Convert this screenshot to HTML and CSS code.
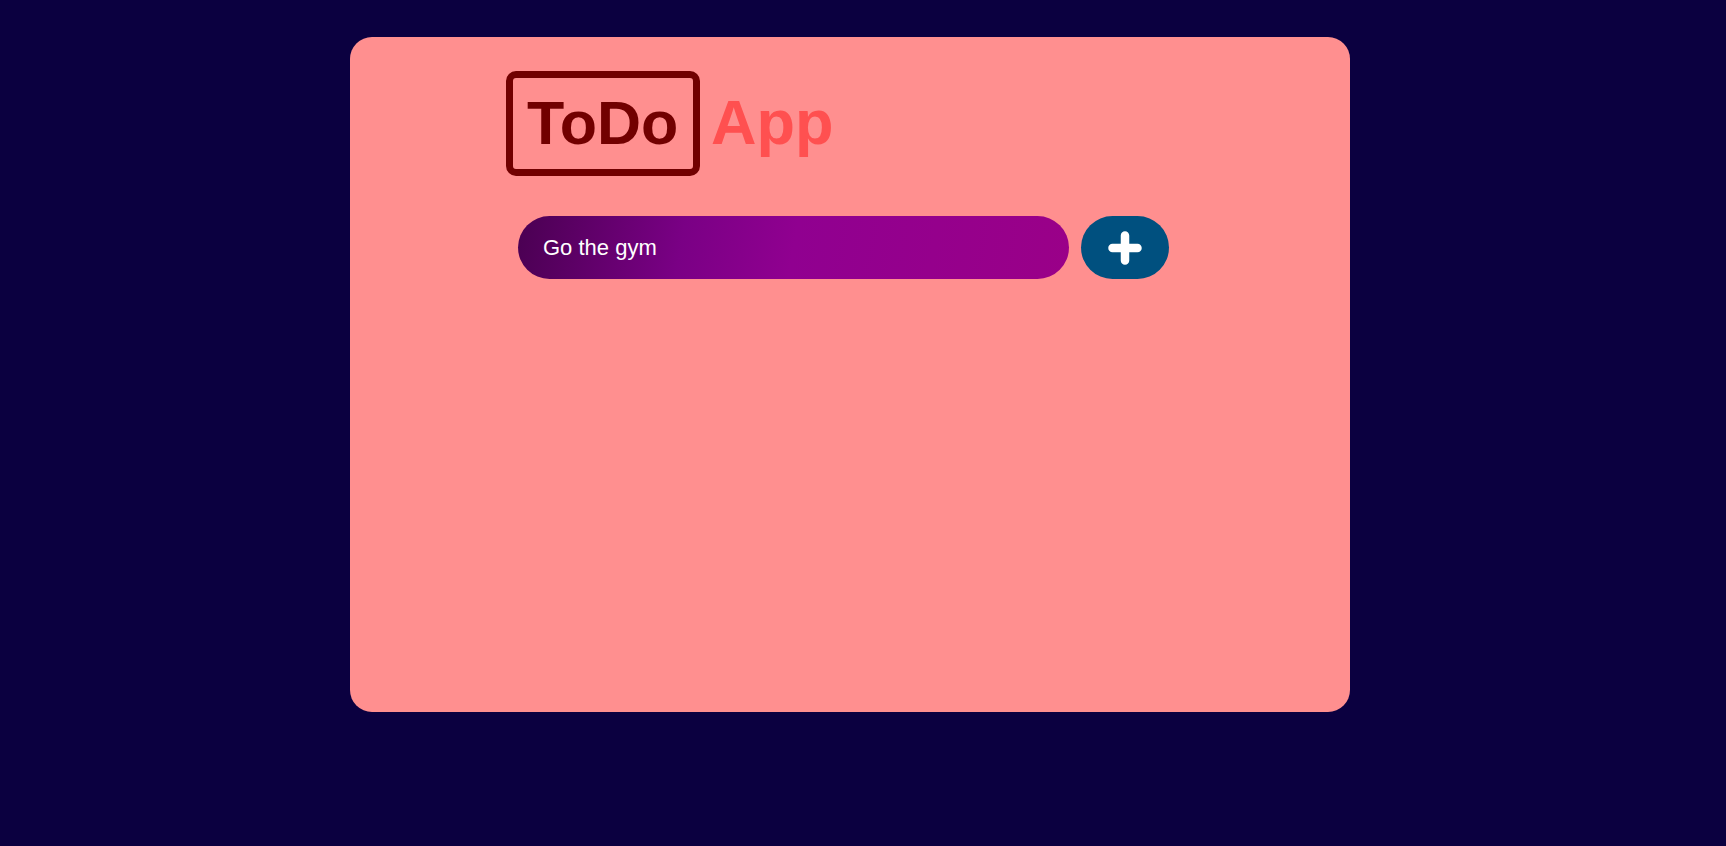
FILE: index.html
```html
<!DOCTYPE html>
<html lang="en">
<head>
<meta charset="utf-8">
<title>ToDo App</title>
<link rel="stylesheet" href="styles.css">
</head>
<body>
<main class="card">
  <header class="header">
    <h1 class="logo">ToDo</h1>
    <span class="app">App</span>
  </header>
  <form class="add-form">
    <input class="task-input" type="text" value="Go the gym" autofocus>
    <button class="add-btn" type="button" aria-label="Add">
      <svg width="34" height="34" viewBox="0 0 34 34"><path d="M17 4.5V29.5M4.5 17H29.5" stroke="#fff" stroke-width="8.5" stroke-linecap="round" fill="none"/></svg>
    </button>
  </form>
</main>
</body>
</html>
```
FILE: styles.css
```css
html, body {
  margin: 0;
  height: 100%;
}
body {
  background: #0b0040;
  padding: 37px 0 0 350px;
  box-sizing: border-box;
  font-family: "Liberation Sans", Arial, sans-serif;
}
.card {
  width: 1000px;
  height: 675px;
  background: #ff8f8f;
  border-radius: 22px;
  box-sizing: border-box;
  padding: 34px 0 0 156px;
}
.header {
  display: flex;
  align-items: baseline;
  gap: 11px;
}
.logo {
  margin: 0;
  box-sizing: border-box;
  width: 194px;
  height: 105px;
  border: 7px solid #720000;
  border-radius: 10px;
  color: #720000;
  font-size: 61px;
  font-weight: bold;
  line-height: 91px;
  padding-left: 14px;
}
.app {
  color: #ff5050;
  font-size: 63px;
  font-weight: bold;
}
.add-form {
  display: flex;
  gap: 12px;
  margin: 40px 0 0 12px;
}
.task-input {
  width: 551px;
  height: 63px;
  box-sizing: border-box;
  border: none;
  outline: none;
  border-radius: 32px;
  padding: 0 26px 0 25px;
  font-family: "Liberation Sans", Arial, sans-serif;
  font-size: 22px;
  color: #fff;
  caret-color: #fff;
  background: linear-gradient(100deg, #4a0052 0%, #7a0085 30%, #900090 50%, #9a0088 100%);
}
.add-btn {
  width: 88px;
  height: 63px;
  border: none;
  border-radius: 32px;
  background: #00507f;
  display: flex;
  align-items: center;
  justify-content: center;
  padding: 0;
  cursor: pointer;
}
```
